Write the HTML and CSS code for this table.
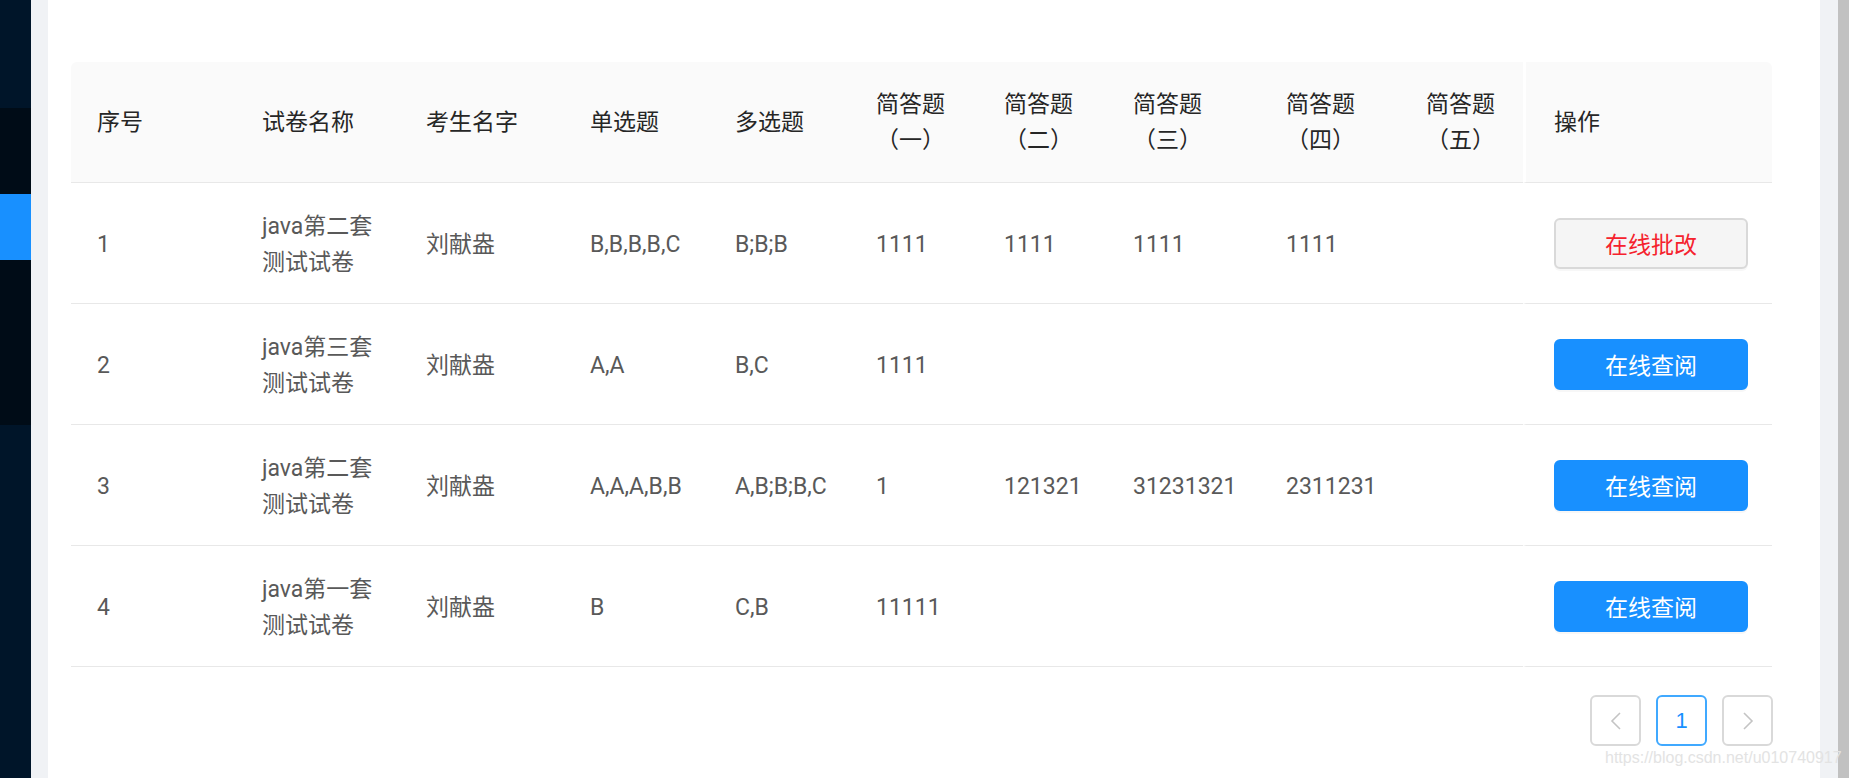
FILE: index.html
```html
<!DOCTYPE html>
<html lang="zh-CN">
<head>
<meta charset="utf-8">
<title>试卷批改</title>
<link rel="stylesheet" href="styles.css">
</head>
<body>
<div class="layout">
  <aside class="sider">
    <div class="sb sb-navy sb-h108"></div>
    <div class="sb sb-dark sb-h86"></div>
    <div class="sb sb-blue sb-h66"></div>
    <div class="sb sb-dark sb-h165"></div>
    <div class="sb sb-navy sb-fill"></div>
  </aside>
  <main class="main">
    <section class="content">
      <table class="grid">
        <colgroup>
          <col class="c1"><col class="c2"><col class="c3"><col class="c4"><col class="c5">
          <col class="c6"><col class="c7"><col class="c8"><col class="c9"><col class="c10"><col class="c11">
        </colgroup>
        <thead>
          <tr>
            <th class="first">序号</th>
            <th>试卷名称</th>
            <th>考生名字</th>
            <th>单选题</th>
            <th>多选题</th>
            <th>简答题<br>（一）</th>
            <th>简答题<br>（二）</th>
            <th>简答题<br>（三）</th>
            <th>简答题<br>（四）</th>
            <th>简答题<br>（五）</th>
            <th class="op last">操作</th>
          </tr>
        </thead>
        <tbody>
          <tr>
            <td>1</td><td>java第二套<br>测试试卷</td><td>刘献盎</td><td>B,B,B,B,C</td><td>B;B;B</td>
            <td>1111</td><td>1111</td><td>1111</td><td>1111</td><td></td>
            <td class="op"><button class="btn btn-grade">在线批改</button></td>
          </tr>
          <tr>
            <td>2</td><td>java第三套<br>测试试卷</td><td>刘献盎</td><td>A,A</td><td>B,C</td>
            <td>1111</td><td></td><td></td><td></td><td></td>
            <td class="op"><button class="btn btn-view">在线查阅</button></td>
          </tr>
          <tr>
            <td>3</td><td>java第二套<br>测试试卷</td><td>刘献盎</td><td>A,A,A,B,B</td><td>A,B;B;B,C</td>
            <td>1</td><td>121321</td><td>31231321</td><td>2311231</td><td></td>
            <td class="op"><button class="btn btn-view">在线查阅</button></td>
          </tr>
          <tr>
            <td>4</td><td>java第一套<br>测试试卷</td><td>刘献盎</td><td>B</td><td>C,B</td>
            <td>11111</td><td></td><td></td><td></td><td></td>
            <td class="op"><button class="btn btn-view">在线查阅</button></td>
          </tr>
        </tbody>
      </table>
      <nav class="pager">
        <span class="pg pg-arrow"><svg width="14" height="22" viewBox="0 0 14 22"><path d="M11 3 L3 11 L11 19" fill="none" stroke="#c4c4c4" stroke-width="1.6"/></svg></span>
        <span class="pg pg-active">1</span>
        <span class="pg pg-arrow"><svg width="14" height="22" viewBox="0 0 14 22"><path d="M3 3 L11 11 L3 19" fill="none" stroke="#c4c4c4" stroke-width="1.6"/></svg></span>
      </nav>
    </section>
  </main>
  <div class="scrollbar"></div>
  <div class="watermark">https://blog.csdn.net/u010740917</div>
</div>
</body>
</html>
```

FILE: styles.css
```css
* { box-sizing: border-box; }
html, body { margin: 0; padding: 0; }
body {
  font-family: Roboto, "Noto Sans CJK SC", sans-serif;
  background: #fff;
}
.layout {
  position: relative;
  display: flex;
  width: 1849px;
  height: 778px;
  overflow: hidden;
}
.sider {
  width: 31px;
  flex: none;
  display: flex;
  flex-direction: column;
}
.sb-navy { background: #001529; }
.sb-dark { background: #000c17; }
.sb-blue { background: #1890ff; }
.sb-h108 { height: 108px; }
.sb-h86 { height: 86px; }
.sb-h66 { height: 66px; }
.sb-h165 { height: 165px; }
.sb-fill { flex: 1; }

.main {
  flex: 1;
  display: flex;
  background: #f0f2f5;
  padding: 0 18px 0 17px;
}
.content {
  flex: 1;
  background: #fff;
  padding: 62px 48px 0 23px;
}
.scrollbar {
  width: 11px;
  flex: none;
  background: #c1c1c1;
}

.grid {
  width: 1701px;
  table-layout: fixed;
  border-collapse: separate;
  border-spacing: 0;
  font-family: Roboto, "Noto Sans CJK SC", sans-serif;
  font-size: 23px;
  line-height: 36px;
}
.c1 { width: 165px; }
.c2 { width: 164px; }
.c3 { width: 164px; }
.c4 { width: 145px; }
.c5 { width: 141px; }
.c6 { width: 128px; }
.c7 { width: 129px; }
.c8 { width: 153px; }
.c9 { width: 140px; }
.c10 { width: 123px; }
.c11 { width: 249px; }

.grid th, .grid td {
  text-align: left;
  vertical-align: middle;
  border-bottom: 1px solid #e8e8e8;
  white-space: nowrap;
}
.grid th {
  height: 121px;
  padding: 25px 8px 23px 26px;
  background: #fafafa;
  color: #262626;
  font-weight: 400;
}
.grid th.first { border-top-left-radius: 6px; }
.grid th.last { border-top-right-radius: 6px; }
.grid td {
  height: 121px;
  padding: 26px 8px 22px 26px;
  color: #595959;
}
.grid .op {
  border-left: 3px solid #fff;
  padding-left: 28px;
}
.grid td.op {
  padding: 0 0 0 4px;
  text-align: center;
}

.btn {
  width: 194px;
  height: 51px;
  border-radius: 6px;
  font-family: "Noto Sans CJK SC", sans-serif;
  font-size: 23px;
  line-height: 1;
  cursor: pointer;
  box-shadow: 0 2px 0 rgba(0, 0, 0, 0.03);
}
.btn-grade {
  background: #f5f5f5;
  border: 2px solid #d9d9d9;
  color: #f5222d;
}
.btn-view {
  background: #1890ff;
  border: 2px solid #1890ff;
  color: #fff;
}

.pager {
  display: flex;
  justify-content: flex-end;
  gap: 15px;
  margin-top: 28px;
  margin-right: -1px;
}
.pg {
  width: 51px;
  height: 51px;
  border: 2px solid #d9d9d9;
  border-radius: 6px;
  display: flex;
  align-items: center;
  justify-content: center;
  background: #fff;
}
.pg-active {
  border-color: #40a9ff;
  color: #1890ff;
  font-family: "Liberation Sans", Arial, sans-serif;
  font-size: 22px;
}

.watermark {
  position: absolute;
  left: 1605px;
  top: 748px;
  font-family: "Liberation Sans", Arial, sans-serif;
  font-size: 16px;
  line-height: 20px;
  color: #e3e3e3;
  white-space: nowrap;
}
```
